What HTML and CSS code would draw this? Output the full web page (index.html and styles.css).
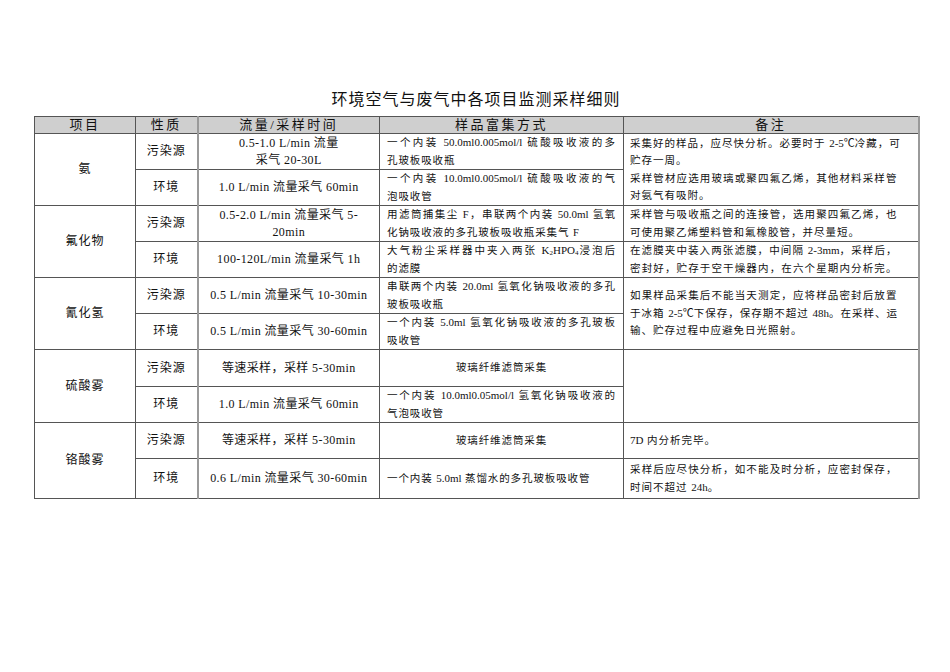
FILE: index.html
```html
<!DOCTYPE html>
<html lang="zh-CN">
<head>
<meta charset="utf-8">
<title>环境空气与废气中各项目监测采样细则</title>
<link rel="stylesheet" href="styles.css">
</head>
<body>
<div class="page">
  <h1 class="title">环境空气与废气中各项目监测采样细则</h1>
  <table class="grid">
    <colgroup>
      <col class="c-item"><col class="c-kind"><col class="c-flow"><col class="c-sample"><col class="c-note">
    </colgroup>
    <thead>
      <tr class="hdr">
        <th>项目</th><th class="kind">性质</th><th>流量/采样时间</th><th>样品富集方式</th><th>备注</th>
      </tr>
    </thead>
    <tbody>
      <tr class="r36">
        <td rowspan="2" class="item">氨</td>
        <td class="kind">污染源</td>
        <td class="flow">0.5-1.0 L/min 流量<br>采气 20-30L</td>
        <td class="sample"><div class="jl">一个内装 <span class="lt">50.0ml0.005mol/l</span> 硫酸吸收液的多</div><div>孔玻板吸收瓶</div></td>
        <td rowspan="2" class="note"><div class="jl">采集好的样品，应尽快分析。必要时于 <span class="lt">2-5℃</span>冷藏，可</div><div>贮存一周。</div><div class="jl">采样管材应选用玻璃或聚四氟乙烯，其他材料采样管</div><div>对氨气有吸附。</div></td>
      </tr>
      <tr class="r36">
        <td class="kind">环境</td>
        <td class="flow">1.0 L/min 流量采气 60min</td>
        <td class="sample"><div class="jl">一个内装 <span class="lt">10.0ml0.005mol/l</span> 硫酸吸收液的气</div><div>泡吸收管</div></td>
      </tr>
      <tr class="r36">
        <td rowspan="2" class="item">氟化物</td>
        <td class="kind">污染源</td>
        <td class="flow">0.5-2.0 L/min 流量采气 5-<br>20min</td>
        <td class="sample"><div class="jl">用滤筒捕集尘 F，串联两个内装 <span class="lt">50.0ml</span> 氢氧</div><div>化钠吸收液的多孔玻板吸收瓶采集气 F</div></td>
        <td class="note"><div class="jl">采样管与吸收瓶之间的连接管，选用聚四氟乙烯，也</div><div>可使用聚乙烯塑料管和氟橡胶管，并尽量短。</div></td>
      </tr>
      <tr class="r35">
        <td class="kind">环境</td>
        <td class="flow">100-120L/min 流量采气 1h</td>
        <td class="sample"><div class="jl">大气粉尘采样器中夹入两张 <span class="lt">K<sub>2</sub>HPO<sub>4</sub></span>浸泡后</div><div>的滤膜</div></td>
        <td class="note"><div class="jl">在滤膜夹中装入两张滤膜，中间隔 <span class="lt">2-3mm</span>，采样后，</div><div class="jl">密封好，贮存于空干燥器内，在六个星期内分析完。</div></td>
      </tr>
      <tr class="r36">
        <td rowspan="2" class="item">氰化氢</td>
        <td class="kind">污染源</td>
        <td class="flow">0.5 L/min 流量采气 10-30min</td>
        <td class="sample"><div class="jl">串联两个内装 <span class="lt">20.0ml</span> 氢氧化钠吸收液的多孔</div><div>玻板吸收瓶</div></td>
        <td rowspan="2" class="note"><div class="jl">如果样品采集后不能当天测定，应将样品密封后放置</div><div class="jl">于冰箱 <span class="lt">2-5℃</span>下保存，保存期不超过 <span class="lt">48h</span>。在采样、运</div><div>输、贮存过程中应避免日光照射。</div></td>
      </tr>
      <tr class="r36">
        <td class="kind">环境</td>
        <td class="flow">0.5 L/min 流量采气 30-60min</td>
        <td class="sample"><div class="jl">一个内装 <span class="lt">5.0ml</span> 氢氧化钠吸收液的多孔玻板</div><div>吸收管</div></td>
      </tr>
      <tr class="r38">
        <td rowspan="2" class="item">硫酸雾</td>
        <td class="kind">污染源</td>
        <td class="flow">等速采样，采样 5-30min</td>
        <td class="sample center">玻璃纤维滤筒采集</td>
        <td rowspan="2" class="note"></td>
      </tr>
      <tr class="r36">
        <td class="kind">环境</td>
        <td class="flow">1.0 L/min 流量采气 60min</td>
        <td class="sample"><div class="jl">一个内装 <span class="lt">10.0ml0.05mol/l</span> 氢氧化钠吸收液的</div><div>气泡吸收管</div></td>
      </tr>
      <tr class="r36">
        <td rowspan="2" class="item">铬酸雾</td>
        <td class="kind">污染源</td>
        <td class="flow">等速采样，采样 5-30min</td>
        <td class="sample center">玻璃纤维滤筒采集</td>
        <td class="note"><span class="lt">7D</span> 内分析完毕。</td>
      </tr>
      <tr class="r39">
        <td class="kind">环境</td>
        <td class="flow">0.6 L/min 流量采气 30-60min</td>
        <td class="sample">一个内装 <span class="lt">5.0ml</span> 蒸馏水的多孔玻板吸收管</td>
        <td class="note"><div class="jl">采样后应尽快分析，如不能及时分析，应密封保存，</div><div>时间不超过 <span class="lt">24h</span>。</div></td>
      </tr>
    </tbody>
  </table>
</div>
</body>
</html>
```
FILE: styles.css
```css
html, body {
  margin: 0;
  padding: 0;
  background: #ffffff;
}
body {
  font-family: "Liberation Serif", "Noto Sans CJK SC", serif;
  color: #111111;
}
.page {
  padding: 90px 0 0 34px;
  width: 884px;
}
.title {
  margin: 0 0 6px 0;
  font-size: 16px;
  line-height: 20px;
  font-weight: normal;
  letter-spacing: 1px;
  text-align: center;
}
.grid {
  border-collapse: collapse;
  width: 884px;
  table-layout: fixed;
  border-right: 2px solid #9a9a9a;
}
.c-item { width: 101px; }
.c-kind { width: 62px; }
.c-flow { width: 182px; }
.c-sample { width: 244px; }
.c-note { width: 295px; }
.grid th, .grid td {
  border: 1px solid #555555;
  padding: 0;
  vertical-align: middle;
}
.grid th {
  background: #cfcfcf;
  font-weight: normal;
  font-size: 13px;
  line-height: 16px;
  height: 16px;
  letter-spacing: 2.5px;
  text-align: center;
}
.grid th.kind, .grid td.kind {
  border-right: 2px solid #9a9a9a;
}
.r35 { height: 35px; }
.r36 { height: 36px; }
.r38 { height: 37px; }
.r39 { height: 40px; }
.item, .kind {
  text-align: center;
  font-size: 12px;
  letter-spacing: 1px;
  line-height: 17px;
}
.flow {
  text-align: center;
  font-size: 12px;
  line-height: 17px;
  letter-spacing: 0.4px;
}
.sample {
  font-size: 10.5px;
  line-height: 17.5px;
  letter-spacing: 0.9px;
  padding: 0 7px !important;
  text-align: left;
}
.sample.center {
  text-align: center;
}
.note {
  font-size: 10.5px;
  line-height: 17.5px;
  letter-spacing: 1px;
  padding: 0 20px 0 6px !important;
  text-align: left;
}
.lt {
  letter-spacing: 0;
  font-size: 11px;
}
.jl {
  text-align: justify;
  text-align-last: justify;
  white-space: nowrap;
}
sub {
  font-size: 7px;
  line-height: 0;
  vertical-align: -1px;
}
```
